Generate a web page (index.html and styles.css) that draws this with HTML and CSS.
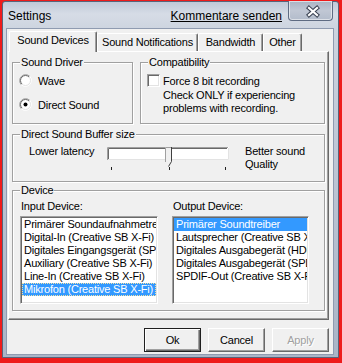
FILE: index.html
```html
<!DOCTYPE html>
<html lang="de">
<head>
<meta charset="utf-8">
<title>Settings</title>
<link rel="stylesheet" href="styles.css">
</head>
<body>
<div class="window">
  <div class="titlebar">
    <span class="title">Settings</span>
    <span class="feedback">Kommentare senden</span>
    <div class="close">
      <svg width="45" height="19" viewBox="0 0 45 19">
        <path d="M20 7 L28 14 M28 7 L20 14" stroke="#3a4252" stroke-width="4.2" stroke-linecap="square" fill="none"/>
        <path d="M20 7 L28 14 M28 7 L20 14" stroke="#ffffff" stroke-width="2.2" stroke-linecap="square" fill="none"/>
      </svg>
    </div>
  </div>
  <div class="client">
    <div class="tabs">
      <div class="tab active t1">Sound Devices</div>
      <div class="tab t2">Sound Notifications</div>
      <div class="tab t3">Bandwidth</div>
      <div class="tab t4">Other</div>
    </div>
    <div class="panel">
      <div class="row">
        <div class="group driver">
          <span class="legend">Sound Driver</span>
          <div class="opt">
            <svg class="radio" width="13" height="13" viewBox="0 0 13 13">
              <circle cx="6.5" cy="6.5" r="5.5" fill="#fff"/>
              <path d="M2.26 10.74 A6 6 0 0 1 10.74 2.26" stroke="#a0a0a0" fill="none"/>
              <path d="M2.96 10.04 A5 5 0 0 1 10.04 2.96" stroke="#696969" fill="none"/>
              <path d="M10.74 2.26 A6 6 0 0 1 2.26 10.74" stroke="#ffffff" fill="none"/>
              <path d="M10.04 2.96 A5 5 0 0 1 2.96 10.04" stroke="#e3e3e3" fill="none"/>
            </svg>
            <span>Wave</span>
          </div>
          <div class="opt">
            <svg class="radio" width="13" height="13" viewBox="0 0 13 13">
              <circle cx="6.5" cy="6.5" r="5.5" fill="#fff"/>
              <path d="M2.26 10.74 A6 6 0 0 1 10.74 2.26" stroke="#a0a0a0" fill="none"/>
              <path d="M2.96 10.04 A5 5 0 0 1 10.04 2.96" stroke="#696969" fill="none"/>
              <path d="M10.74 2.26 A6 6 0 0 1 2.26 10.74" stroke="#ffffff" fill="none"/>
              <path d="M10.04 2.96 A5 5 0 0 1 2.96 10.04" stroke="#e3e3e3" fill="none"/>
              <circle cx="6.5" cy="6.5" r="2" fill="#000"/>
            </svg>
            <span>Direct Sound</span>
          </div>
        </div>
        <div class="group compat">
          <span class="legend">Compatibility</span>
          <div class="checkrow">
            <span class="check"></span>
            <span>Force 8 bit recording</span>
          </div>
          <div class="note">Check ONLY if experiencing<br>problems with recording.</div>
        </div>
      </div>
      <div class="group buffer">
        <span class="legend">Direct Sound Buffer size</span>
        <div class="bufrow">
          <span class="lat">Lower latency</span>
          <svg class="slider" width="122" height="24" viewBox="0 0 122 24">
            <rect x="0" y="0" width="122" height="13" fill="#fff"/>
            <path d="M0.5 13 V0.5 H121" stroke="#a0a0a0" fill="none"/>
            <path d="M1.5 12 V1.5 H120" stroke="#696969" fill="none"/>
            <path d="M1 12.5 H121.5 V1" stroke="#e3e3e3" fill="none"/>
            <path d="M58 0 H65 V14 L62 19 L58 15 Z" fill="#f0f0f0"/>
            <path d="M58.5 15 V0.5 H64" stroke="#a0a0a0" fill="none"/>
            <path d="M64.5 0 V14.5 L61.5 19.5" stroke="#404040" fill="none"/>
            <path d="M4.5 20 V23 M62.5 20 V23 M118.5 20 V23" stroke="#202020"/>
          </svg>
          <span class="quality">Better sound<br>Quality</span>
        </div>
      </div>
      <div class="group device">
        <span class="legend">Device</span>
        <div class="cols">
          <div class="col col-in">
            <div class="collabel">Input Device:</div>
            <div class="listbox">
              <div class="item">Primärer Soundaufnahmetreiber</div>
              <div class="item">Digital-In (Creative SB X-Fi)</div>
              <div class="item">Digitales Eingangsgerät (SPDIF)</div>
              <div class="item">Auxiliary (Creative SB X-Fi)</div>
              <div class="item">Line-In (Creative SB X-Fi)</div>
              <div class="item sel focus">Mikrofon (Creative SB X-Fi)</div>
            </div>
          </div>
          <div class="col col-out">
            <div class="collabel">Output Device:</div>
            <div class="listbox">
              <div class="item sel">Primärer Soundtreiber</div>
              <div class="item">Lautsprecher (Creative SB X-Fi)</div>
              <div class="item">Digitales Ausgabegerät (HDMI)</div>
              <div class="item">Digitales Ausgabegerät (SPDIF)</div>
              <div class="item">SPDIF-Out (Creative SB X-Fi)</div>
            </div>
          </div>
        </div>
      </div>
    </div>
    <div class="buttons">
      <div class="btn default">Ok</div>
      <div class="btn">Cancel</div>
      <div class="btn disabled">Apply</div>
    </div>
  </div>
</div>
</body>
</html>
```

FILE: styles.css
```css
* { box-sizing: border-box; }
html, body { margin: 0; padding: 0; }
body {
  width: 342px;
  height: 363px;
  overflow: hidden;
  background: #ee1b1b;
  padding: 1px 0 0 2px;
  font-family: "Liberation Sans", Arial, sans-serif;
  font-size: 11px;
  letter-spacing: -0.2px;
  color: #000;
}
.window {
  width: 337px;
  height: 357px;
  border: 1px solid #58647a;
  border-radius: 3px 3px 0 0;
  background: linear-gradient(to bottom, #bfc8d7 0px, #d6dce6 12px, #cdd4df 27px, #c2cad8 120px, #aab5c7 100%);
  display: flex;
  flex-direction: column;
}
.titlebar {
  height: 26px;
  display: flex;
  padding: 0 5px 0 5px;
  font-size: 12px;
  letter-spacing: 0;
}
.title { align-self: center; margin-top: 2px; }
.feedback {
  align-self: center;
  margin-top: 2px;
  margin-left: auto;
  margin-right: 6px;
  text-decoration: underline;
}
.close {
  width: 45px;
  height: 20px;
  margin-top: -1px;
  border: 1px solid #5e6b82;
  border-top: none;
  border-radius: 0 0 4px 4px;
  background: linear-gradient(to bottom, #aab3c3 0%, #c0c7d4 50%, #b3bccb 100%);
  box-shadow: inset 0 0 0 1px rgba(255,255,255,0.55);
}
.close svg { display: block; }
.client {
  flex: 1;
  margin: 0 4px 2px 3px;
  border: 1px solid #8f9bb0;
  background: #f0f0f0;
  padding: 2px 4px 0 1px;
  display: flex;
  flex-direction: column;
}
.tabs {
  height: 20px;
  display: flex;
  align-items: flex-end;
  padding-left: 1px;
}
.tab {
  height: 18px;
  line-height: 16px;
  text-align: center;
  border: 1px solid;
  border-color: #fff #696969 transparent #fff;
  border-bottom: none;
  border-radius: 2px 2px 0 0;
  box-shadow: inset -1px 0 #a0a0a0;
  background: #f0f0f0;
  white-space: nowrap;
}
.tab.active {
  height: 21px;
  line-height: 17px;
  margin-bottom: -1px;
  position: relative;
  z-index: 1;
}
.t1 { width: 88px; }
.t2 { width: 101px; }
.t3 { width: 65px; }
.t4 { width: 39px; }
.panel {
  height: 269px;
  border: 1px solid;
  border-color: #fff #696969 #696969 #fff;
  box-shadow: inset -1px -1px #a0a0a0;
  padding: 10px 3px 0 3px;
  display: flex;
  flex-direction: column;
}
.row { display: flex; gap: 7px; }
.group {
  position: relative;
  border: 1px solid #a0a0a0;
  box-shadow: inset 1px 1px #fff, 1px 1px #fff;
}
.legend {
  position: absolute;
  top: -7px;
  left: 7px;
  padding: 0 1px;
  line-height: 13px;
  background: #f0f0f0;
  white-space: nowrap;
}
.driver { width: 121px; height: 62px; padding: 11px 0 0 6px; }
.compat { width: 185px; height: 62px; padding: 11px 0 0 6px; }
.opt { display: flex; align-items: center; gap: 6px; height: 13px; }
.opt + .opt { margin-top: 11px; }
.radio { display: block; flex: none; }
.checkrow { display: flex; align-items: center; gap: 3px; height: 13px; }
.check {
  width: 13px;
  height: 13px;
  flex: none;
  background: #fff;
  border: 1px solid;
  border-color: #a0a0a0 #fff #fff #a0a0a0;
  box-shadow: inset 1px 1px #696969, inset -1px -1px #e3e3e3;
}
.note { margin: 2px 0 0 16px; line-height: 13px; }
.buffer { height: 48px; margin-top: 10px; padding: 10px 0 0 16px; }
.bufrow { display: flex; align-items: flex-start; line-height: 13px; }
.lat { width: 78px; }
.slider { display: block; margin-top: 2px; flex: none; }
.quality { margin-left: 16px; }
.device { height: 121px; margin-top: 8px; padding: 9px 0 0 7px; }
.cols { display: flex; gap: 14px; }
.col-in { width: 138px; }
.col-out { width: 137px; }
.collabel { line-height: 13px; margin-bottom: 3px; padding-left: 1px; }
.col-out .collabel { padding-left: 1px; }
.listbox {
  height: 88px;
  background: #fff;
  border: 1px solid;
  border-color: #a0a0a0 #fff #fff #a0a0a0;
  box-shadow: inset 1px 1px #696969, inset -1px -1px #e3e3e3;
  padding: 1px;
  overflow: hidden;
}
.item {
  height: 13px;
  line-height: 13px;
  padding: 0 2px;
  white-space: nowrap;
  overflow: hidden;
}
.item.sel { background: #3399ff; color: #fff; }
.item.focus { outline: 1px dotted #f3e2a6; outline-offset: -1px; }
.buttons {
  display: flex;
  justify-content: flex-end;
  gap: 7px;
  margin-top: 8px;
}
.btn {
  width: 57px;
  height: 24px;
  line-height: 22px;
  text-align: center;
  background: #f0f0f0;
  border: 1px solid;
  border-color: #fff #696969 #696969 #fff;
  box-shadow: inset -1px -1px #a0a0a0;
}
.btn.default {
  border: 1px solid #202020;
  box-shadow: inset 1px 1px #fff, inset -1px -1px #696969, inset -2px -2px #a0a0a0;
}
.btn.disabled { color: #a0a0a0; text-shadow: 1px 1px #fff; }
```
